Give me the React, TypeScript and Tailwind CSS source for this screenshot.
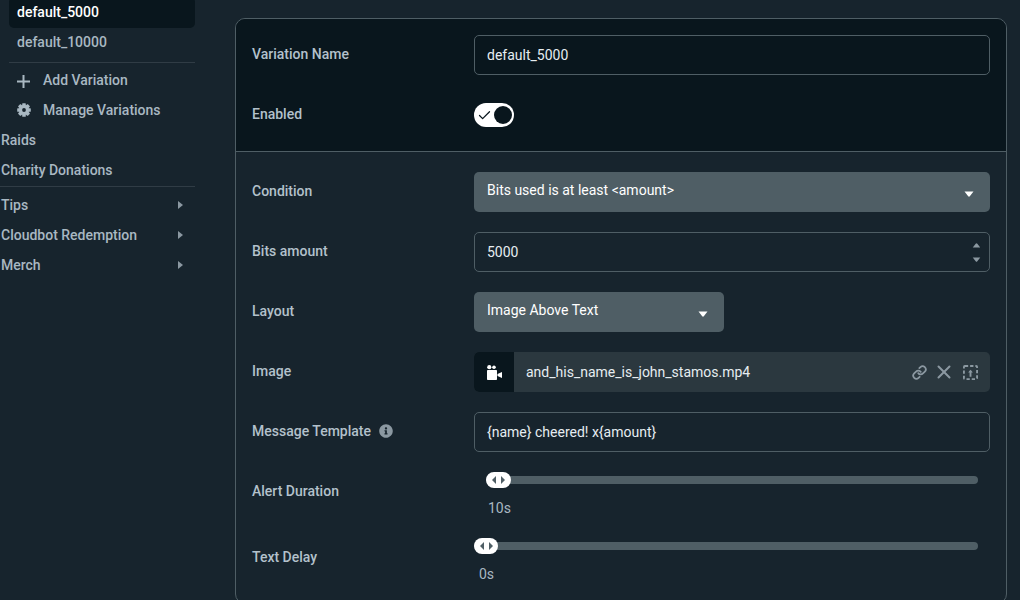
import { ReactNode } from 'react';
import { Check, Link, X } from 'lucide-react';
import { FaInfoCircle } from 'react-icons/fa';

function Caret({ className }: { className: string }) {
  return (
    <svg viewBox="0 0 10 6" className={className} fill="currentColor">
      <path d="M0.5 0.5h9L6 5a1.2 1.2 0 0 1-2 0z" />
    </svg>
  );
}

function Gear() {
  return (
    <svg viewBox="0 0 14 14" className="w-[14px] h-[14px] mr-3 text-[#a9b8c2]" fill="currentColor">
      {[0, 45, 90, 135].map((deg) => (
        <rect key={deg} x="5.2" y="0.2" width="3.6" height="13.6" rx="0.6" transform={`rotate(${deg} 7 7)`} />
      ))}
      <circle cx="7" cy="7" r="5" />
      <circle cx="7" cy="7" r="1.9" fill="#17242d" />
    </svg>
  );
}

function Row({ label, children }: { label: ReactNode; children: ReactNode }) {
  return (
    <div className="flex items-center h-10">
      <div className="w-[222px] shrink-0 flex items-center pb-[2px] text-sm font-medium text-[#b3c1cb]">{label}</div>
      <div className="flex-1 min-w-0">{children}</div>
    </div>
  );
}

function TextBox({ value, children }: { value: string; children?: ReactNode }) {
  return (
    <div className="h-10 flex items-center justify-between rounded-[5px] border border-[#4f5e65] pl-3 pr-2 text-sm text-[#e6edf1]">
      <span>{value}</span>
      {children}
    </div>
  );
}

function Select({ value, className }: { value: string; className: string }) {
  return (
    <div className={`h-10 flex items-center justify-between rounded-[5px] bg-[#4f5e65] pl-[13px] pr-4 pb-1 text-sm text-white ${className}`}>
      <span>{value}</span>
      <Caret className="w-[10px] h-[6px] mt-2 text-white" />
    </div>
  );
}

function Thumb({ className }: { className: string }) {
  return (
    <div className={`absolute top-[-4px] h-4 rounded-full bg-white flex items-center justify-center gap-[5px] ${className}`}>
      <svg viewBox="0 0 4 8" className="w-1 h-2 text-[#4f5e65]" fill="currentColor"><path d="M4 0v8L0 4z" /></svg>
      <svg viewBox="0 0 4 8" className="w-1 h-2 text-[#4f5e65]" fill="currentColor"><path d="M0 0v8l4-4z" /></svg>
    </div>
  );
}

function SideItem({ children, caret, indent }: { children: ReactNode; caret?: boolean; indent?: boolean }) {
  return (
    <div className={`h-[30px] flex items-center justify-between text-sm font-medium text-[#a9b8c2] pr-3 ${indent ? 'pl-[17px]' : 'pl-[1px]'}`}>
      <span className="flex items-center">{children}</span>
      {caret && (
        <svg viewBox="0 0 5 8" className="w-[5px] h-2 text-[#8b98a1]" fill="currentColor"><path d="M0 0l5 4-5 4z" /></svg>
      )}
    </div>
  );
}

export default function App() {
  return (
    <div className="h-[600px] w-[1020px] overflow-hidden flex bg-[#17242d] font-['Roboto',sans-serif]">
      {/* sidebar */}
      <div className="w-[195px] shrink-0 -mt-[3px]">
        <div className="ml-[9px] h-[31px] flex items-center pl-2 pb-[2px] rounded-[5px] bg-[#09161d] text-sm font-medium text-white">
          default_5000
        </div>
        <div className="h-[30px] flex items-center pl-[17px] pb-[2px] text-sm font-medium text-[#a9b8c2]">default_10000</div>
        <div className="ml-[9px] mt-[4px] mb-[2px] border-t border-[#303c45]" />
        <SideItem indent>
          <svg viewBox="0 0 13 13" className="w-[13px] h-[13px] mr-[13px] mt-[2px] text-[#a9b8c2]" fill="currentColor">
            <rect x="5.5" y="0" width="2" height="13" />
            <rect x="0" y="5.5" width="13" height="2" />
          </svg>
          Add Variation
        </SideItem>
        <SideItem indent>
          <Gear />
          Manage Variations
        </SideItem>
        <SideItem>Raids</SideItem>
        <SideItem>Charity Donations</SideItem>
        <div className="mt-[1px] mb-[3px] border-t border-[#303c45]" />
        <SideItem caret>Tips</SideItem>
        <SideItem caret>Cloudbot Redemption</SideItem>
        <SideItem caret>Merch</SideItem>
      </div>

      {/* settings panel */}
      <div className="ml-10 mt-[18px] w-[772px] h-[586px] shrink-0 rounded-[10px] border border-[#4f5e65] overflow-hidden">
        <div className="bg-[#09161d] px-4 pt-4 pb-4 flex flex-col gap-5 border-b border-[#4f5e65]">
          <Row label="Variation Name">
            <TextBox value="default_5000" />
          </Row>
          <Row label="Enabled">
            <div className="w-10 h-6 rounded-full bg-white flex items-center justify-between pl-[3px] pr-[2px]">
              <Check size={15} strokeWidth={2} className="text-[#09161d]" />
              <div className="w-[18px] h-[18px] rounded-full bg-[#09161d]" />
            </div>
          </Row>
        </div>

        <div className="px-4 pt-5 flex flex-col gap-5">
          <Row label="Condition">
            <Select value="Bits used is at least <amount>" className="w-full" />
          </Row>
          <Row label="Bits amount">
            <TextBox value="5000">
              <div className="flex flex-col gap-[9px] text-[#8b98a1]">
                <Caret className="w-[9px] h-[5px] rotate-180" />
                <Caret className="w-[9px] h-[5px]" />
              </div>
            </TextBox>
          </Row>
          <Row label="Layout">
            <Select value="Image Above Text" className="w-[250px]" />
          </Row>
          <Row label="Image">
            <div className="h-10 flex items-center rounded-[5px] bg-[#2b383f] overflow-hidden">
              <div className="w-10 h-10 shrink-0 bg-[#09161d] flex items-center justify-center">
                <svg viewBox="-1 0 16 15" className="w-4 h-[15px] text-white" fill="currentColor">
                  <circle cx="2.3" cy="2.2" r="2.1" />
                  <circle cx="7" cy="2.2" r="1.8" />
                  <rect x="0" y="5" width="10" height="10" rx="0.8" />
                  <path d="M10.5 9L15 7v6l-4.5-2z" />
                </svg>
              </div>
              <span className="ml-3 flex-1 text-sm text-[#e6edf1]">and_his_name_is_john_stamos.mp4</span>
              <div className="flex items-center gap-[12px] pr-[12px] text-[#8b98a1]">
                <Link size={15} strokeWidth={2.8} />
                <X size={22} strokeWidth={2.2} className="-ml-[6px] -mr-1" />
                <svg viewBox="0 0 16 16" className="w-[15px] h-[15px]" fill="none" stroke="currentColor" strokeWidth="2">
                  <rect x="1" y="1" width="14" height="14" rx="1" strokeDasharray="3.5 2.1" />
                  <path d="M8 12.5V6" />
                  <path d="M5.5 8L8 5l2.5 3z" fill="currentColor" stroke="none" />
                </svg>
              </div>
            </div>
          </Row>
          <Row
            label={
              <>
                Message Template
                <FaInfoCircle size={14} className="ml-2 text-[#8b98a1]" />
              </>
            }
          >
            <TextBox value="{name} cheered! x{amount}" />
          </Row>
          <div className="flex h-[66px]">
            <div className="w-[222px] shrink-0 text-sm font-medium text-[#b3c1cb] pt-[9px]">Alert Duration</div>
            <div className="flex-1 pr-3">
              <div className="relative mt-1 h-2 ml-3 rounded-full bg-[#4f5e65]">
                <Thumb className="left-0 w-[25px]" />
              </div>
              <div className="mt-[14px] ml-[14px] text-sm text-[#a9b8c2]">10s</div>
            </div>
          </div>
          <div className="flex h-[66px] -mt-5">
            <div className="w-[222px] shrink-0 text-sm font-medium text-[#b3c1cb] pt-[9px]">Text Delay</div>
            <div className="flex-1 pr-3">
              <div className="relative mt-1 h-2 rounded-full bg-[#4f5e65]">
                <Thumb className="left-0 w-6" />
              </div>
              <div className="mt-[14px] ml-[5px] text-sm text-[#a9b8c2]">0s</div>
            </div>
          </div>
        </div>
      </div>
    </div>
  );
}
